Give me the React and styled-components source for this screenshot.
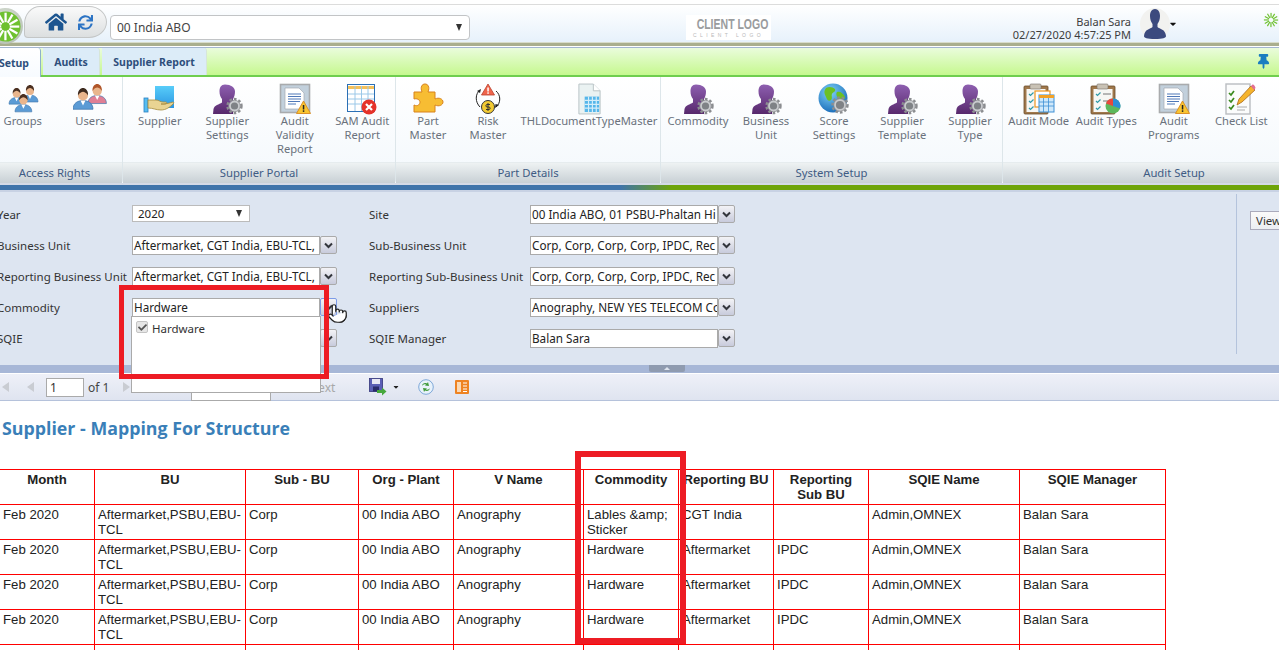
import styled, { createGlobalStyle } from "styled-components";
import { FaHome, FaSync, FaThumbtack, FaCheck, FaCaretDown } from "react-icons/fa";
import { Pointer } from "lucide-react";

const GlobalStyle = createGlobalStyle`
  html, body { margin: 0; padding: 0; height: 100%; overflow: hidden; background: #fff; }
  body { font-family: "Noto Sans", Tahoma, sans-serif; font-size: 12px; color: #333; }
`;

const Page = styled.div`
  position: relative;
  width: 1360px;
  height: 650px;
  margin-left: -13px;
  overflow: hidden;
`;

/* top header */
const Header = styled.div`
  height: 38px;
  margin-top: 4px;
  border-top: 1px solid #dcdcdc;
  background: linear-gradient(#fff, #e6f1fb);
  display: flex;
  align-items: center;
  width: 1292px;
`;
const Rule = styled.div`
  height: 3px;
  width: 1292px;
  background: #a9ae8e;
  border-bottom: 1px solid #fff;
  box-shadow: 0 -1px 0 #d8dccb;
`;
const Sun = styled.div`
  width: 36px;
  height: 36px;
  margin: 4px 0 0 0;
  flex: none;
  border-radius: 50%;
  background: radial-gradient(circle at 45% 40%, #e8efe4, #a9b3a6);
  display: flex;
  align-items: center;
  justify-content: center;
  z-index: 1;
`;
const HomePanel = styled.div`
  width: 83px;
  height: 32px;
  margin: 0 0 4px 1px;
  padding-left: 20px;
  box-sizing: border-box;
  flex: none;
  display: flex;
  align-items: center;
  gap: 11px;
  background: linear-gradient(#fafafa, #dcdfe0);
  border: 1px solid #c4c6c6;
  border-radius: 16px 18px 18px 4px / 18px 16px 16px 4px;
  color: #1c5590;
  svg:first-child { font-size: 22px; }
  svg:last-child { font-size: 15px; color: #2d74c4; }
`;
const SiteSelect = styled.div`
  width: 360px;
  height: 25px;
  margin: 7px 0 0 3px;
  padding: 0 7px 0 6px;
  box-sizing: border-box;
  flex: none;
  display: flex;
  align-items: center;
  justify-content: space-between;
  background: #fff;
  border: 1px solid #c2c4c6;
  border-radius: 4px;
  font-size: 12px;
  color: #444;
`;
const Arrow = styled.span`
  width: 0;
  height: 0;
  border-left: 3.5px solid transparent;
  border-right: 3.5px solid transparent;
  border-top: 7px solid #333;
`;
const ClientLogo = styled.div`
  width: 85px;
  height: 25px;
  margin: 7px 0 0 216px;
  padding-top: 2px;
  box-sizing: border-box;
  flex: none;
  background: #fff;
  text-align: center;
  color: #9a9c9e;
  font-family: "Liberation Sans", Arial, sans-serif;
`;
const LogoMain = styled.div`
  font-size: 14px;
  line-height: 15px;
  font-weight: 700;
  transform: scaleX(0.75);
  white-space: nowrap;
`;
const LogoSub = styled.div`
  font-size: 5px;
  line-height: 6px;
  letter-spacing: 3.4px;
  color: #b8b8b8;
  white-space: nowrap;
`;
const UserInfo = styled.div`
  width: 360px;
  text-align: right;
  flex: none;
  font-size: 11px;
  line-height: 13px;
  color: #3d3d3d;
  margin-top: 7px;
`;
const Avatar = styled.div`
  width: 30px;
  height: 32px;
  margin-left: 9px;
  flex: none;
  border-radius: 50%;
  background: #f2f2f0;
  display: flex;
  justify-content: center;
  align-items: center;
`;
const Caret = styled(FaCaretDown)`
  font-size: 10px;
  color: #111;
`;
const SmallSun = styled.div`
  margin: 0 0 8px 87px;
  display: flex;
`;

/* tabs */
const TabStrip = styled.div`
  height: 27px;
  width: 1292px;
  border-top: 1px solid #a3b5d0;
  border-bottom: 2px solid #6fce4e;
  background: linear-gradient(#eafcdc, #c6f88f);
  display: flex;
  align-items: flex-end;
  gap: 2px;
  position: relative;
`;
const Tab = styled.div`
  height: ${(p) => (p.$active ? "29px" : "27px")};
  width: ${(p) => p.$w}px;
  margin-bottom: ${(p) => (p.$active ? "-2px" : "0")};
  display: flex;
  align-items: center;
  justify-content: ${(p) => (p.$active ? "flex-end" : "center")};
  padding-right: ${(p) => (p.$active ? "11px" : "0")};
  box-sizing: border-box;
  font-weight: 700;
  font-size: 10.5px;
  color: #2e4f7c;
  background: ${(p) => (p.$active ? "linear-gradient(#fff, #f7fbff)" : "#dcecf8")};
  border-right: 1px solid ${(p) => (p.$active ? "#8fb0cc" : "#d7e6d8")};
  border-radius: 0 3px 0 0;
  z-index: 1;
`;
const Pin = styled(FaThumbtack)`
  margin: 0 0 6px 1047px;
  font-size: 15px;
  color: #1a7dc0;
`;

/* ribbon */
const Ribbon = styled.div`
  display: flex;
  width: 1360px;
  height: 106px;
  background: linear-gradient(#fff, #f3f8fc);
`;
const Group = styled.div`
  width: ${(p) => p.$w}px;
  flex: none;
  box-sizing: border-box;
  display: flex;
  flex-direction: column;
  border-right: 1px solid #dde6ea;
  border-radius: 0 0 3px 0;
`;
const Items = styled.div`
  height: 85px;
  padding-left: ${(p) => p.$pad}px;
  display: flex;
`;
const Item = styled.div`
  width: ${(p) => p.$w}px;
  flex: none;
  text-align: center;
  padding-top: 6px;
  font-size: 11.2px;
  line-height: 14px;
  color: #6a727c;
  svg { display: block; margin: 0 auto -1px; }
`;
const GroupLabel = styled.div`
  height: 21px;
  line-height: 20px;
  text-align: center;
  font-size: 11.3px;
  color: #3f5c84;
  background: linear-gradient(#eef2f3, #c8d0d5);
  border-top: 1px solid #e6ecee;
  box-sizing: border-box;
`;
const RibbonBar = styled.div`
  height: 9px;
  width: 1292px;
  border-top: 2px solid #d4dae6;
  box-sizing: border-box;
  background: linear-gradient(90deg, #3f74aa 0%, #3f74aa 49%, #6ea40a 53%, #6ea40a 100%);
  border-bottom: 2px solid #c8d2e4;
`;

/* filters */
const FilterPanel = styled.div`
  height: 173px;
  padding-top: 7px;
  box-sizing: border-box;
  background: #dde5f1;
  display: flex;
  position: relative;
`;
const FilterGrid = styled.div`
  margin-left: 10px;
  width: 1239px;
  flex: none;
  display: grid;
  grid-template-columns: 135px 205px 32px 161px 205px;
  grid-auto-rows: 31px;
  align-content: start;
  align-items: center;
`;
const FieldLabel = styled.div`
  font-size: 11.5px;
  color: #333;
  white-space: nowrap;
`;
const Control = styled.div`
  display: flex;
  position: relative;
  height: 19px;
  width: 205px;
`;
const Gap = styled.div``;
const TextBox = styled.div`
  width: 188px;
  height: 19px;
  box-sizing: border-box;
  background: #fff;
  border: 1px solid #aaa;
  padding: 0 1px;
  line-height: 17px;
  font-size: 11.7px;
  color: #222;
  overflow: hidden;
  white-space: nowrap;
`;
const DropButton = styled.div`
  width: 17px;
  height: 18px;
  box-sizing: border-box;
  border: 1px solid ${(p) => (p.$focus ? "#7d9ce8" : "#aaa")};
  background: linear-gradient(#f3f3f6, #c8cbdc);
  border-radius: 2px;
  display: flex;
  align-items: center;
  justify-content: center;
`;
const YearSelect = styled.div`
  width: 118px;
  height: 17px;
  box-sizing: border-box;
  background: #fff;
  border: 1px solid #bbb;
  padding: 0 7px 0 5px;
  display: flex;
  align-items: center;
  justify-content: space-between;
  font-size: 11.5px;
  color: #222;
`;
const Popup = styled.div`
  position: absolute;
  top: 18px;
  left: -1px;
  width: 190px;
  height: 77px;
  box-sizing: border-box;
  background: #fff;
  border: 1px solid #aaa;
  padding: 4px;
  display: flex;
  gap: 4px;
  font-size: 11.5px;
  color: #333;
  z-index: 3;
`;
const CheckBox = styled.div`
  width: 12px;
  height: 12px;
  box-sizing: border-box;
  border: 1px solid #c4c4c4;
  border-radius: 2px;
  background: #e6e6e6;
  display: flex;
  align-items: center;
  justify-content: center;
  color: #555;
  font-size: 9px;
`;
const Cursor = styled(Pointer)`
  position: absolute;
  left: 195px;
  top: 5px;
  width: 21px;
  height: 21px;
  fill: #fff;
  color: #222;
  stroke-width: 1.4;
  z-index: 4;
`;
const Divider = styled.div`
  width: 1px;
  height: 160px;
  margin-top: -5px;
  background: #b4c3dc;
  flex: none;
`;
const ViewButton = styled.div`
  margin: 12px 0 0 13px;
  width: 70px;
  height: 19px;
  flex: none;
  box-sizing: border-box;
  border: 1px solid #aab;
  background: linear-gradient(#fafafa, #eceef2);
  font-size: 11.5px;
  line-height: 17px;
  padding-left: 5px;
  color: #333;
  white-space: nowrap;
`;
const Splitter = styled.div`
  height: 8px;
  background: #a7b7d7;
  display: flex;
  border-bottom: 1px solid #fff;
`;
const SplitHandle = styled.div`
  margin-left: 662px;
  width: 36px;
  height: 7px;
  background: #8f9bb0;
  border-radius: 0 0 2px 2px;
  display: flex;
  align-items: center;
  justify-content: center;
  &::after {
    content: "";
    border-left: 3px solid transparent;
    border-right: 3px solid transparent;
    border-bottom: 3px solid #dfe5ef;
  }
`;

/* report toolbar */
const Toolbar = styled.div`
  height: 27px;
  box-sizing: border-box;
  background: linear-gradient(#eef0f8, #dfe4f0);
  border-bottom: 1px solid #b5c2db;
  display: flex;
  align-items: center;
  font-size: 12px;
  color: #444;
  width: 1292px;
`;
const NavArrow = styled.span`
  margin-left: ${(p) => p.$ml}px;
  width: 0;
  height: 0;
  flex: none;
  border-top: 5px solid transparent;
  border-bottom: 5px solid transparent;
  ${(p) => (p.$right ? "border-left: 7px solid #c9ccd2;" : "border-right: 7px solid #c9ccd2;")}
`;
const PageInput = styled.div`
  margin-left: 12px;
  width: 38px;
  height: 19px;
  flex: none;
  box-sizing: border-box;
  background: #fff;
  border: 1px solid #aaa;
  padding-left: 3px;
  line-height: 17px;
  color: #333;
`;
const PageOf = styled.span`
  margin-left: 4px;
  width: 31px;
  flex: none;
`;
const FindBox = styled.div`
  margin: 14px 0 0 61px;
  width: 80px;
  height: 13px;
  flex: none;
  box-sizing: border-box;
  background: #fff;
  border: 1px solid #aaa;
`;
const NextLink = styled.span`
  margin-left: 38px;
  width: 60px;
  flex: none;
  color: #a8a8a8;
  font-size: 12px;
`;
const ToolIcon = styled.div`
  margin-left: ${(p) => p.$ml}px;
  flex: none;
  display: flex;
  align-items: center;
`;

/* report */
const Report = styled.div`
  margin-left: 12px;
`;
const Title = styled.h1`
  margin: 15px 0 0 3px;
  font-size: 17.8px;
  line-height: 25px;
  font-weight: 700;
  color: #3a7fb8;
  font-family: "Open Sans", sans-serif;
`;
const Table = styled.table`
  margin-top: 28px;
  width: 1166px;
  table-layout: fixed;
  border-collapse: collapse;
  font-family: "Liberation Sans", Arial, sans-serif;
  font-size: 13.2px;
  line-height: 15px;
  color: #222;
`;
const Th = styled.th`
  border: 1px solid #f00;
  height: 35px;
  padding: 2px 3px 0;
  box-sizing: border-box;
  vertical-align: top;
  text-align: center;
  font-weight: 700;
  white-space: ${(p) => (p.$nowrap ? "nowrap" : "normal")};
`;
const Td = styled.td`
  border: 1px solid #f00;
  height: 35px;
  padding: 2px 3px 0;
  box-sizing: border-box;
  vertical-align: top;
  overflow: hidden;
`;

/* annotations drawn on the screenshot */
const RedBox = styled.div`
  position: absolute;
  left: ${(p) => p.$x + 13}px;
  top: ${(p) => p.$y}px;
  width: ${(p) => p.$w}px;
  height: ${(p) => p.$h}px;
  box-sizing: border-box;
  border: ${(p) => p.$t}px solid #ed1c24;
  z-index: 5;
  pointer-events: none;
`;

const Chevron = () => (
  <svg width="9" height="7" viewBox="0 0 9 7">
    <path d="M1 1.5l3.5 3.5L8 1.5" fill="none" stroke="#33363c" strokeWidth="2" />
  </svg>
);

const SunMark = ({ size = 31, color = "#fff", core = "#6ec12f" }) => (
  <svg width={size} height={size} viewBox="0 0 36 36">
    <circle cx="18" cy="18" r="17.500" fill={core} />
    {Array.from({ length: 12 }).map((_, i) => (
      <rect key={i} x="16.800" y="2" width="2.600" height="11" fill={color} transform={`rotate(${i * 30} 18 18)`} />
    ))}
  </svg>
);

const Gear = ({ cx, cy, r = 6 }) => (
  <g>
    <circle cx={cx} cy={cy} r={r} fill="none" stroke="#8b8d90" strokeWidth="2.400" strokeDasharray="2.600 2" />
    <circle cx={cx} cy={cy} r={r - 1.2} fill="#c9cbce" stroke="#85878a" strokeWidth="0.800" />
    <circle cx={cx} cy={cy} r={r - 3.4} fill="#7f8286" />
  </g>
);

const PurpleUser = () => (
  <svg width="32" height="32" viewBox="0 0 32 32">
    <defs>
      <linearGradient id="pu" x1="0" y1="0" x2="0" y2="1">
        <stop offset="0" stopColor="#8e5fb0" />
        <stop offset="1" stopColor="#57286c" />
      </linearGradient>
    </defs>
    <path d="M13 1.500c-4 0-5.500 3.200-5.500 7 0 3.200 1 5.500 2.500 7.500v3.500c-3 2-7.500 2.500-8.500 6.500L1 31h20V16c1.200-2 2-4.500 2-7.500 0-4-4-7-10-7z" fill="url(#pu)" transform="translate(1 0)" />
    <Gear cx={23.500} cy={23} r={7} />
  </svg>
);

const Person = ({ x, y, s = 1, shirt = "#5b9bd5", hair = "#4a2f20", skin = "#e9b58c" }) => (
  <g transform={`translate(${x} ${y}) scale(${s})`}>
    <path d="M0 17c0-5 4-7 8-7s8 2 8 7z" fill={shirt} stroke="#3f76ac" strokeWidth="0.600" />
    <path d="M6 10h4l-2 4z" fill="#fff" />
    <circle cx="8" cy="6" r="4" fill={skin} />
    <path d="M4 6c-.5-4 2-6 4-6s4.500 2 4 6c-1-2-3-3-4-3s-3 1-4 3z" fill={hair} />
  </g>
);

const GroupsIcon = () => (
  <svg width="32" height="32" viewBox="0 0 32 32">
    <Person x={2} y={5} s={0.95} />
    <Person x={15} y={2} s={1} />
    <Person x={8} y={11} s={1.05} />
  </svg>
);
const UsersIcon = () => (
  <svg width="34" height="32" viewBox="0 0 34 32">
    <Person x={15} y={1} s={1.15} shirt="#e07f95" hair="#b0562a" />
    <Person x={0} y={5} s={1.25} hair="#3d2a1e" />
  </svg>
);
const SupplierIcon = () => (
  <svg width="34" height="32" viewBox="0 0 34 32">
    <defs>
      <linearGradient id="sb" x1="0" y1="0" x2="0" y2="1">
        <stop offset="0" stopColor="#58cdf9" />
        <stop offset="1" stopColor="#2b96e2" />
      </linearGradient>
    </defs>
    <rect x="12" y="3" width="19" height="22" fill="url(#sb)" />
    <rect x="1" y="15" width="4" height="14" fill="#56bdf0" stroke="#2880c4" strokeWidth="0.800" />
    <path d="M5 17h8c3 0 4 2 7 2h3c1 0 1 2-1 2h-4c3 .5 9-1 12-2 1 0 1 1 0 2-3 3-7 6-12 6s-8-2-13-2z" fill="#e9d493" stroke="#a48a3c" strokeWidth="0.800" />
  </svg>
);
const Warning = ({ x, y, s = 1 }) => (
  <g transform={`translate(${x} ${y}) scale(${s})`}>
    <path d="M7 0l7 12.500H0z" fill="#f9c531" stroke="#d98a1d" strokeWidth="0.900" />
    <rect x="6.300" y="4" width="1.500" height="4.500" fill="#222" />
    <rect x="6.300" y="9.300" width="1.500" height="1.600" fill="#222" />
  </g>
);
const DocIcon = () => (
  <svg width="32" height="32" viewBox="0 0 32 32">
    <rect x="1.500" y="1.500" width="29" height="28" fill="#c2d0dc" stroke="#a9abad" strokeWidth="1.600" />
    <path d="M6 5h14l5 5v16H6z" fill="#fff" stroke="#a5abb3" strokeWidth="0.700" />
    <path d="M9 11h13M9 13.500h13M9 16h13M9 18.500h12M9 21h8" stroke="#4f78b8" strokeWidth="1" />
    <Warning x={17.500} y={18} />
  </svg>
);
const TableXIcon = () => (
  <svg width="32" height="32" viewBox="0 0 32 32">
    <rect x="1.500" y="1.500" width="27" height="27" fill="#fff" stroke="#2a6fb5" strokeWidth="1" />
    <rect x="2" y="3" width="26" height="3" fill="#f4c15b" />
    <path d="M2 11h26M2 16h26M2 21h26M9 3v25M15.500 3v25M22 3v25" stroke="#9bc8e8" strokeWidth="1" />
    <circle cx="23" cy="24" r="7.500" fill="#e5322a" />
    <path d="M20 21l6 6M26 21l-6 6" stroke="#fff" strokeWidth="2.200" />
  </svg>
);
const PuzzleIcon = () => (
  <svg width="32" height="32" viewBox="0 0 32 32">
    <path d="M2 9h8c-2-5 0-8 3-8s5 3 3 8h7v7c4-2 8 0 8 3s-4 5-8 3v7H2v-7c4 2 6-1 6-3s-3-4-6-3z" fill="#f7bd33" stroke="#d8821c" strokeWidth="1" />
  </svg>
);
const RiskIcon = () => (
  <svg width="32" height="32" viewBox="0 0 32 32">
    <path d="M16 1l6.500 11H9.500z" fill="#f0654c" stroke="#b8402c" strokeWidth="0.800" />
    <rect x="15.300" y="4.500" width="1.500" height="4" fill="#fff" />
    <rect x="15.300" y="9.300" width="1.500" height="1.500" fill="#fff" />
    <circle cx="16" cy="24" r="6.500" fill="#f3cb33" stroke="#333" strokeWidth="1" />
    <path d="M18 21.500h-3c-1.500 0-1.500 2.500 0 2.500h2c1.500 0 1.500 2.500 0 2.500h-3M16 20v8" fill="none" stroke="#333" strokeWidth="1" />
    <path d="M8 7C3 11 3 19 8 24M24 8c5 4 5 12 0 16" fill="none" stroke="#222" strokeWidth="1" />
    <path d="M5 8l4-2-1 4zM27 22l-4 3 .5-4z" fill="#222" />
  </svg>
);
const CalcDocIcon = () => (
  <svg width="27" height="32" viewBox="0 0 28 33">
    <path d="M3 1h15l7 7v24H3z" fill="#eaf2f2" stroke="#b8c3c5" strokeWidth="1" />
    <path d="M18 1v7h7" fill="#fff" stroke="#b8c3c5" strokeWidth="1" />
    <rect x="9" y="14" width="15" height="16" fill="#55b6ea" />
    <path d="M9 18h15M9 22h15M9 26h15M13 14v16M17 14v16M21 14v16" stroke="#d5eefa" strokeWidth="1.200" />
  </svg>
);
const GlobeIcon = () => (
  <svg width="32" height="32" viewBox="0 0 32 32">
    <defs>
      <radialGradient id="gl" cx="0.4" cy="0.3" r="0.8">
        <stop offset="0" stopColor="#7fd2f7" />
        <stop offset="1" stopColor="#0f62b4" />
      </radialGradient>
    </defs>
    <circle cx="15" cy="15" r="14.500" fill="url(#gl)" />
    <path d="M8 5c3-2 7-1 9 1 1 3-2 3-3 5s1 4-1 6-4 0-5-3-3-5 0-9zM19 9c3-1 6 1 8 5 0 3-3 3-5 2s-5-4-3-7z" fill="#6cc024" />
    <Gear cx={22} cy={22} r={7.500} />
  </svg>
);
const Clipboard = ({ w = 24 }) => (
  <g>
    <rect x="2" y="3" width={w} height="28" rx="1" fill="#a0784c" stroke="#6a4c2a" strokeWidth="0.800" />
    <rect x="4.500" y="6" width={w - 5} height="23" fill="#f7f7f4" />
    <rect x={w / 2 - 4} y="1" width="11" height="5" rx="1" fill="#c9c2b5" stroke="#76706a" strokeWidth="0.600" />
    <path d="M7 11l1.500 1.500 3-3M7 18l1.500 1.500 3-3M7 25l1.500 1.500 3-3" fill="none" stroke="#2f9aa8" strokeWidth="1.200" />
  </g>
);
const AuditModeIcon = () => (
  <svg width="34" height="32" viewBox="0 0 34 32">
    <Clipboard />
    <rect x="13" y="8" width="15" height="16" fill="#fff" stroke="#ed9521" strokeWidth="1.200" />
    <rect x="17" y="12" width="15" height="17" fill="#cfe8fa" stroke="#3d8fd4" strokeWidth="1" />
    <rect x="17" y="12" width="15" height="3" fill="#f3a126" />
    <path d="M17 19h15M17 23h15M21.500 15v14M26.500 15v14" stroke="#3d8fd4" strokeWidth="0.800" />
  </svg>
);
const AuditTypesIcon = () => (
  <svg width="34" height="32" viewBox="0 0 34 32">
    <Clipboard />
    <path d="M14 11h8M14 18h8" stroke="#777" strokeWidth="1.200" />
    <circle cx="24" cy="23" r="7.500" fill="#5cb85c" />
    <path d="M24 23v-7.500a7.500 7.500 0 0 1 7 10z" fill="#2d8fd6" />
    <path d="M24 23l-7-2.500a7.500 7.500 0 0 1 7-5z" fill="#e8483c" />
  </svg>
);
const CheckListIcon = () => (
  <svg width="34" height="32" viewBox="0 0 34 32">
    <rect x="2" y="1" width="24" height="30" fill="#fbfcfc" stroke="#b9bdc1" strokeWidth="1.400" />
    <path d="M5 10l2 2 3-4M5 17l2 2 3-4M5 24l2 2 3-4" fill="none" stroke="#3b8a1e" strokeWidth="1.700" />
    <path d="M13 24h10M13 27h8" stroke="#999" strokeWidth="0.800" />
    <path d="M13 22l2-6L27 3l4 4-13 12z" fill="#f5b42c" stroke="#a9691a" strokeWidth="0.800" />
    <path d="M27 3l1.500-1.500c1-.5 3 2 3 3.500L30 7z" fill="#e36f94" />
  </svg>
);
const AvatarIcon = () => (
  <svg width="24" height="32" viewBox="0 0 24 32">
    <path d="M12 1c-4 0-5 4-5 7 0 3 1 6 2.500 8v3c-2 2-8 2-8.500 9-.1 2 3 3 11 3s11-1 11-3c-.5-7-6.500-7-8.500-9v-3c1.500-2 2.500-5 2.500-8 0-3-1-7-5-7z" fill="#3c4a7e" />
  </svg>
);
const SaveIcon = () => (
  <svg width="18" height="18" viewBox="0 0 18 18">
    <rect x="0.500" y="0.500" width="13" height="13" fill="#5b5fb5" stroke="#33367a" strokeWidth="0.800" />
    <rect x="3" y="1" width="8" height="5" fill="#e8e8f4" />
    <rect x="4" y="8.500" width="6" height="5" fill="#2a2c6a" />
    <path d="M8 12h5V9.500l4.500 4-4.500 4V15H8z" fill="#46a83c" />
  </svg>
);
const RefreshIcon = () => (
  <svg width="16" height="16" viewBox="0 0 16 16">
    <circle cx="8" cy="8" r="7.300" fill="#e8f2fb" stroke="#7ea8d8" strokeWidth="1" />
    <path d="M4 7c.5-3 3-3.500 5-2.500L10 3l1 4-4-.5 1-1c-1.500-.5-3 0-4 1.500zM12 9c-.5 3-3 3.500-5 2.500L6 13l-1-4 4 .5-1 1c1.500.5 3 0 4-1.500z" fill="#3f9a3a" />
  </svg>
);
const OrangeIcon = () => (
  <svg width="14" height="14" viewBox="0 0 14 14">
    <rect width="14" height="14" rx="1" fill="#ee8322" />
    <rect x="2" y="2" width="4" height="10" fill="#fbd9b4" />
    <path d="M8 3h4M8 6h4M8 9h4M8 11.500h4" stroke="#fff" strokeWidth="1.200" />
  </svg>
);

const ribbon = [
  {
    label: "Access Rights", w: 136, pad: 2, itemW: 67.5,
    items: [
      { icon: <GroupsIcon />, text: "Groups" },
      { icon: <UsersIcon />, text: "Users" },
    ],
  },
  {
    label: "Supplier Portal", w: 273, pad: 3, itemW: 67.5,
    items: [
      { icon: <SupplierIcon />, text: "Supplier" },
      { icon: <PurpleUser />, text: "Supplier Settings" },
      { icon: <DocIcon />, text: "Audit Validity Report" },
      { icon: <TableXIcon />, text: "SAM Audit Report" },
    ],
  },
  {
    label: "Part Details", w: 265, pad: 2,
    items: [
      { icon: <PuzzleIcon />, text: "Part Master", w: 60 },
      { icon: <RiskIcon />, text: "Risk Master", w: 60 },
      { icon: <CalcDocIcon />, text: "THLDocumentTypeMaster", w: 142 },
    ],
  },
  {
    label: "System Setup", w: 342, pad: 3, itemW: 68,
    items: [
      { icon: <PurpleUser />, text: "Commodity" },
      { icon: <PurpleUser />, text: "Business Unit" },
      { icon: <GlobeIcon />, text: "Score Settings" },
      { icon: <PurpleUser />, text: "Supplier Template" },
      { icon: <PurpleUser />, text: "Supplier Type" },
    ],
  },
  {
    label: "Audit Setup", w: 343, pad: 2, itemW: 67.5,
    items: [
      { icon: <AuditModeIcon />, text: "Audit Mode" },
      { icon: <AuditTypesIcon />, text: "Audit Types" },
      { icon: <DocIcon />, text: "Audit Programs" },
      { icon: <CheckListIcon />, text: "Check List" },
    ],
  },
];

const columns = [
  ["Month", 95], ["BU", 151], ["Sub - BU", 113], ["Org - Plant", 95], ["V Name", 130],
  ["Commodity", 95], ["Reporting BU", 95], ["Reporting Sub BU", 95], ["SQIE Name", 151], ["SQIE Manager", 146],
];

const febRow = (commodity, repBu, repSub) => [
  "Feb 2020", "Aftermarket,PSBU,EBU-TCL", "Corp", "00 India ABO", "Anography",
  commodity, repBu, repSub, "Admin,OMNEX", "Balan Sara",
];
const rows = [
  febRow("Lables &amp; Sticker", "CGT India", ""),
  febRow("Hardware", "Aftermarket", "IPDC"),
  febRow("Hardware", "Aftermarket", "IPDC"),
  febRow("Hardware", "Aftermarket", "IPDC"),
  ["Mar 2020", "Aftermarket,PSBU,EBU-TCL", "IPD & Corp Func", "Malaysia ABO", "TH Sales Co Ltd", "Hardware", "Aftermarket", "IPDC", "Balan Sara", "Balan Sara"],
];

const App = () => {
  return (
    <Page>
      <GlobalStyle />
      <Header>
        <Sun><SunMark /></Sun>
        <HomePanel><FaHome /><FaSync /></HomePanel>
        <SiteSelect>00 India ABO<Arrow /></SiteSelect>
        <ClientLogo>
          <LogoMain>CLIENT LOGO</LogoMain>
          <LogoSub>CLIENT LOGO</LogoSub>
        </ClientLogo>
        <UserInfo>Balan Sara<br />02/27/2020 4:57:25 PM</UserInfo>
        <Avatar><AvatarIcon /></Avatar>
        <Caret />
        <SmallSun><SunMark size={16} color="#6ec12f" core="transparent" /></SmallSun>
      </Header>
      <Rule />
      <TabStrip>
        <Tab $active $w={54}>Setup</Tab>
        <Tab $w={57}>Audits</Tab>
        <Tab $w={105}>Supplier Report</Tab>
        <Pin />
      </TabStrip>
      <Ribbon>
        {ribbon.map((g) => (
          <Group key={g.label} $w={g.w}>
            <Items $pad={g.pad}>
              {g.items.map((it) => (
                <Item key={it.text} $w={it.w || g.itemW}>
                  {it.icon}
                  {it.text}
                </Item>
              ))}
            </Items>
            <GroupLabel>{g.label}</GroupLabel>
          </Group>
        ))}
      </Ribbon>
      <RibbonBar />
      <FilterPanel>
        <FilterGrid>
          <FieldLabel>Year</FieldLabel>
          <Control><YearSelect>2020<Arrow /></YearSelect></Control>
          <Gap />
          <FieldLabel>Site</FieldLabel>
          <Control><TextBox>00 India ABO, 01 PSBU-Phaltan Hi</TextBox><DropButton><Chevron /></DropButton></Control>

          <FieldLabel>Business Unit</FieldLabel>
          <Control><TextBox>Aftermarket, CGT India, EBU-TCL,</TextBox><DropButton><Chevron /></DropButton></Control>
          <Gap />
          <FieldLabel>Sub-Business Unit</FieldLabel>
          <Control><TextBox>Corp, Corp, Corp, Corp, IPDC, Rec</TextBox><DropButton><Chevron /></DropButton></Control>

          <FieldLabel>Reporting Business Unit</FieldLabel>
          <Control><TextBox>Aftermarket, CGT India, EBU-TCL,</TextBox><DropButton><Chevron /></DropButton></Control>
          <Gap />
          <FieldLabel>Reporting Sub-Business Unit</FieldLabel>
          <Control><TextBox>Corp, Corp, Corp, Corp, IPDC, Rec</TextBox><DropButton><Chevron /></DropButton></Control>

          <FieldLabel>Commodity</FieldLabel>
          <Control>
            <TextBox>Hardware</TextBox>
            <DropButton $focus><Chevron /></DropButton>
            <Popup>
              <CheckBox><FaCheck /></CheckBox>
              Hardware
            </Popup>
            <Cursor />
          </Control>
          <Gap />
          <FieldLabel>Suppliers</FieldLabel>
          <Control><TextBox>Anography, NEW YES TELECOM Co</TextBox><DropButton><Chevron /></DropButton></Control>

          <FieldLabel>SQIE</FieldLabel>
          <Control><TextBox /><DropButton><Chevron /></DropButton></Control>
          <Gap />
          <FieldLabel>SQIE Manager</FieldLabel>
          <Control><TextBox>Balan Sara</TextBox><DropButton><Chevron /></DropButton></Control>
        </FilterGrid>
        <Divider />
        <ViewButton>View Report</ViewButton>
      </FilterPanel>
      <Splitter><SplitHandle /></Splitter>
      <Toolbar>
        <NavArrow $ml={15} />
        <NavArrow $ml={18} />
        <PageInput>1</PageInput>
        <PageOf>of 1</PageOf>
        <NavArrow $ml={4} $right />
        <FindBox />
        <NextLink>Next</NextLink>
        <ToolIcon $ml={0}><SaveIcon /></ToolIcon>
        <ToolIcon $ml={5}><FaCaretDown size={8} color="#222" /></ToolIcon>
        <ToolIcon $ml={18}><RefreshIcon /></ToolIcon>
        <ToolIcon $ml={21}><OrangeIcon /></ToolIcon>
      </Toolbar>
      <Report>
        <Title>Supplier - Mapping For Structure</Title>
        <Table>
          <colgroup>
            {columns.map(([name, w]) => <col key={name} width={w} />)}
          </colgroup>
          <thead>
            <tr>
              {columns.map(([name]) => <Th key={name} $nowrap={name === "Reporting BU"}>{name}</Th>)}
            </tr>
          </thead>
          <tbody>
            {rows.map((row, i) => (
              <tr key={i}>
                {row.map((cell, j) => <Td key={j}>{cell}</Td>)}
              </tr>
            ))}
          </tbody>
        </Table>
      </Report>
      <RedBox $x={119} $y={285} $w={210} $h={94} $t={5} />
      <RedBox $x={575} $y={451} $w={111} $h={193} $t={6} />
    </Page>
  );
};

export default App;
